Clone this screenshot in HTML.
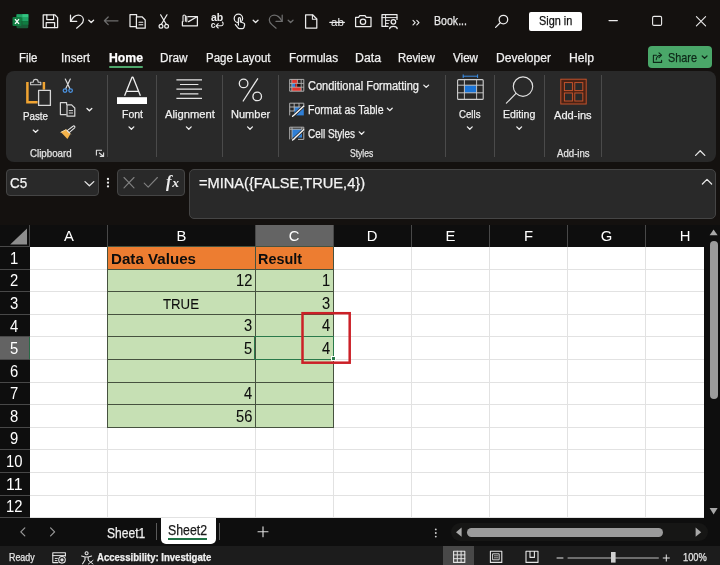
<!DOCTYPE html>
<html>
<head>
<meta charset="utf-8">
<title>Excel</title>
<style>
*{box-sizing:border-box;margin:0;padding:0}
html,body{width:720px;height:565px;overflow:hidden;background:#14110f}
body{font-family:"Liberation Sans",sans-serif;color:#fff;position:relative}
.abs{position:absolute}
.t{position:absolute;white-space:nowrap;line-height:1;transform-origin:0 50%;-webkit-text-stroke:0.25px currentColor}
svg{position:absolute;overflow:visible;left:0;top:0}
.sep{position:absolute;top:75px;width:1px;height:82px;background:#4a4a4a}
.hl{position:absolute;left:29.5px;width:674.5px;height:1px;background:#e2e2e2}
.vl{position:absolute;top:246.5px;width:1px;height:271px;background:#e2e2e2}
.ch{position:absolute;top:225px;height:21.5px;background:#0e0e0e}
</style>
</head>
<body>

<!-- ===== RIBBON PANEL ===== -->
<div class="abs" style="left:6px;top:71px;width:710px;height:91px;background:#292929;border-radius:8px"></div>
<div class="sep" style="left:107px"></div>
<div class="sep" style="left:156px"></div>
<div class="sep" style="left:222.3px"></div>
<div class="sep" style="left:278px"></div>
<div class="sep" style="left:445px"></div>
<div class="sep" style="left:494.4px"></div>
<div class="sep" style="left:544.4px"></div>
<div class="sep" style="left:601.3px"></div>

<!-- Home underline -->
<div class="abs" style="left:109px;top:65.5px;width:34px;height:2px;background:#4fa86d;border-radius:1px"></div>
<!-- Sign in button -->
<div class="abs" style="left:529px;top:12.2px;width:52.8px;height:18.6px;background:#fff;border-radius:2px"></div>
<!-- Share button -->
<div class="abs" style="left:648px;top:46px;width:64px;height:22px;background:#4aa769;border-radius:4px"></div>

<!-- ===== FORMULA BAR ===== -->
<div class="abs" style="left:6px;top:169px;width:93px;height:26.5px;background:#292929;border:1px solid #454545;border-radius:4px"></div>
<div class="abs" style="left:117px;top:169px;width:68px;height:26.5px;background:#292929;border:1px solid #454545;border-radius:4px"></div>
<div class="abs" style="left:189px;top:169px;width:527px;height:49.5px;background:#292929;border:1px solid #454545;border-radius:5px"></div>

<!-- ===== GRID ===== -->
<div class="abs" style="left:0;top:225px;width:704px;height:293px;background:#fff"></div>
<!-- header strip -->
<div class="abs" style="left:0;top:225px;width:704px;height:21.5px;background:#0e0e0e"></div>
<div class="abs" style="left:0;top:225px;width:29.5px;height:293px;background:#0e0e0e"></div>
<!-- selected col C header / row 5 header -->
<div class="abs" style="left:254.5px;top:224.5px;width:79px;height:21.5px;background:#646464"></div>
<div class="abs" style="left:0;top:337px;width:29.5px;height:22.5px;background:#636363"></div>
<div class="abs" style="left:28.5px;top:337px;width:1px;height:22.5px;background:#2a6b48"></div>
<div class="abs" style="left:255px;top:245.5px;width:78.5px;height:1px;background:#3c5a48"></div>
<div class="hl" style="top:268.59px"></div>
<div class="hl" style="top:291.18px"></div>
<div class="hl" style="top:313.77px"></div>
<div class="hl" style="top:336.37px"></div>
<div class="hl" style="top:358.96px"></div>
<div class="hl" style="top:381.55px"></div>
<div class="hl" style="top:404.14px"></div>
<div class="hl" style="top:426.73px"></div>
<div class="hl" style="top:449.33px"></div>
<div class="hl" style="top:471.92px"></div>
<div class="hl" style="top:494.51px"></div>
<div class="hl" style="top:517.10px"></div>
<div class="vl" style="left:107.00px"></div>
<div class="vl" style="left:254.50px"></div>
<div class="vl" style="left:332.75px"></div>
<div class="vl" style="left:411.00px"></div>
<div class="vl" style="left:489.00px"></div>
<div class="vl" style="left:567.00px"></div>
<div class="vl" style="left:645.00px"></div>
<div class="abs" style="left:0;top:246.00px;width:29.5px;height:1px;background:#484848"></div>
<div class="abs" style="left:0;top:268.59px;width:29.5px;height:1px;background:#484848"></div>
<div class="abs" style="left:0;top:291.18px;width:29.5px;height:1px;background:#484848"></div>
<div class="abs" style="left:0;top:313.77px;width:29.5px;height:1px;background:#484848"></div>
<div class="abs" style="left:0;top:336.37px;width:29.5px;height:1px;background:#484848"></div>
<div class="abs" style="left:0;top:358.96px;width:29.5px;height:1px;background:#484848"></div>
<div class="abs" style="left:0;top:381.55px;width:29.5px;height:1px;background:#484848"></div>
<div class="abs" style="left:0;top:404.14px;width:29.5px;height:1px;background:#484848"></div>
<div class="abs" style="left:0;top:426.73px;width:29.5px;height:1px;background:#484848"></div>
<div class="abs" style="left:0;top:449.33px;width:29.5px;height:1px;background:#484848"></div>
<div class="abs" style="left:0;top:471.92px;width:29.5px;height:1px;background:#484848"></div>
<div class="abs" style="left:0;top:494.51px;width:29.5px;height:1px;background:#484848"></div>
<div class="abs" style="left:0;top:517.10px;width:29.5px;height:1px;background:#484848"></div>
<div class="abs" style="left:29.00px;top:225px;width:1px;height:21.5px;background:#484848"></div>
<div class="abs" style="left:107.00px;top:225px;width:1px;height:21.5px;background:#484848"></div>
<div class="abs" style="left:254.50px;top:225px;width:1px;height:21.5px;background:#484848"></div>
<div class="abs" style="left:332.75px;top:225px;width:1px;height:21.5px;background:#484848"></div>
<div class="abs" style="left:411.00px;top:225px;width:1px;height:21.5px;background:#484848"></div>
<div class="abs" style="left:489.00px;top:225px;width:1px;height:21.5px;background:#484848"></div>
<div class="abs" style="left:567.00px;top:225px;width:1px;height:21.5px;background:#484848"></div>
<div class="abs" style="left:645.00px;top:225px;width:1px;height:21.5px;background:#484848"></div>
<div class="abs" style="left:107.5px;top:246.50px;width:225.75px;height:22.59px;background:#ed7d31"></div>
<div class="abs" style="left:107.5px;top:269.09px;width:225.75px;height:158.14px;background:#c6e0b4"></div>
<div class="abs" style="left:107px;top:246px;width:226.75px;height:1px;background:#46523f"></div>
<div class="abs" style="left:107px;top:269px;width:226.75px;height:1px;background:#46523f"></div>
<div class="abs" style="left:107px;top:291px;width:226.75px;height:1px;background:#46523f"></div>
<div class="abs" style="left:107px;top:314px;width:226.75px;height:1px;background:#46523f"></div>
<div class="abs" style="left:107px;top:336px;width:226.75px;height:1px;background:#46523f"></div>
<div class="abs" style="left:107px;top:359px;width:226.75px;height:1px;background:#46523f"></div>
<div class="abs" style="left:107px;top:382px;width:226.75px;height:1px;background:#46523f"></div>
<div class="abs" style="left:107px;top:404px;width:226.75px;height:1px;background:#46523f"></div>
<div class="abs" style="left:107px;top:427px;width:226.75px;height:1px;background:#46523f"></div>
<div class="abs" style="left:107.00px;top:246.00px;width:1.4px;height:181.73px;background:#46523f"></div>
<div class="abs" style="left:254.50px;top:246.00px;width:1.4px;height:181.73px;background:#46523f"></div>
<div class="abs" style="left:332.75px;top:246.00px;width:1.4px;height:181.73px;background:#46523f"></div>
<div class="abs" style="left:254px;top:335.87px;width:80px;height:24.09px;border:1.5px solid #2a7a4b"></div>
<div class="abs" style="left:330.5px;top:356.46px;width:5px;height:5px;background:#2a7a4b;border:1px solid #fff"></div>

<!-- ===== SCROLLBARS ===== -->
<div class="abs" style="left:704px;top:225px;width:16px;height:293px;background:#0e0e0e"></div>
<div class="abs" style="left:710px;top:241px;width:8px;height:158px;background:#9b9b9b;border-radius:4px"></div>

<!-- ===== SHEET BAR ===== -->
<div class="abs" style="left:0;top:518px;width:720px;height:28px;background:#0e0e0e"></div>
<div class="abs" style="left:160.8px;top:518px;width:55.6px;height:25.6px;background:#fff;border-radius:0 0 5px 5px"></div>
<div class="abs" style="left:168.3px;top:537.5px;width:39px;height:2px;background:#1e7145"></div>
<div class="abs" style="left:156px;top:523px;width:1px;height:17px;background:#5a5a5a"></div>
<div class="abs" style="left:219px;top:523px;width:1px;height:17px;background:#5a5a5a"></div>
<!-- h scrollbar -->
<div class="abs" style="left:451px;top:523px;width:257px;height:18px;background:#161615;border-radius:9px"></div>
<div class="abs" style="left:466.5px;top:528px;width:196px;height:8.5px;background:#9b9b9b;border-radius:4.5px"></div>

<!-- ===== STATUS BAR ===== -->
<div class="abs" style="left:0;top:546px;width:720px;height:19px;background:#1c1c1c"></div>
<div class="abs" style="left:443px;top:546px;width:31px;height:19px;background:#484848"></div>

<div class="abs" style="left:0;top:0;width:720px;height:565px;will-change:transform">
<svg width="720" height="565" viewBox="0 0 720 565" fill="none" stroke-linecap="round" stroke-linejoin="round">
<!-- ===== TITLE BAR ICONS ===== -->
<g id="xl" stroke="none">
  <rect x="16.5" y="14.2" width="11.8" height="14" rx="1.2" fill="#185c37"/>
  <rect x="16.5" y="14.2" width="11.8" height="3.6" fill="#21a366"/>
  <rect x="22.4" y="14.2" width="5.9" height="3.6" fill="#33c481"/>
  <rect x="16.5" y="17.7" width="11.8" height="3.6" fill="#107c41"/>
  <rect x="22.4" y="17.7" width="5.9" height="3.6" fill="#21a366"/>
  <rect x="16.5" y="21.2" width="11.8" height="3.5" fill="#185c37"/>
  <rect x="22.4" y="21.2" width="5.9" height="3.5" fill="#107c41"/>
  <rect x="12.5" y="17" width="9" height="9" rx="1" fill="#107c41"/>
  <path d="M15 19.2 L19 23.9 M19 19.2 L15 23.9" stroke="#fff" stroke-width="1.3" stroke-linecap="butt"/>
</g>
<g stroke="#ececec" stroke-width="1.25">
  <!-- save -->
  <path d="M43.2 14.8 H54.8 L57.6 17.6 V27.6 H43.2 Z"/>
  <path d="M46.8 14.8 V19.6 H53.6 V14.8"/>
  <path d="M46.2 27.6 V22.6 H54.6 V27.6"/>
  <!-- undo -->
  <path d="M70.5 15.2 V21.4 H76.7"/>
  <path d="M70.8 21.2 C72.6 17.6 75.4 15.2 78.4 15.2 C81.4 15.2 83.4 17.4 83.4 20 C83.4 22 82.2 23.4 80.8 24.6 L76.6 28.2"/>
  <path d="M88.8 20.2 L91.2 22.5 L93.6 20.2" stroke-width="1.3"/>
  <!-- copy -->
  <path d="M136.2 26.6 H130 V14.6 H136.6 V16.6"/>
  <path d="M136.4 16.8 H142 L145.2 20 V28.2 H136.4 Z"/>
  <path d="M139 22.2 H142.8 M139 24.8 H142.8" stroke-width="1.1"/>
  <!-- scissors -->
  <path d="M160.6 14.8 L166.2 24.2 M167 14.8 L161.4 24.2"/>
  <circle cx="161" cy="26.2" r="1.9"/><circle cx="166.6" cy="26.2" r="1.9"/>
  <!-- envelope + clip -->
  <path d="M188 16.6 H197.4 V25.8 H182.4 V21.6"/>
  <path d="M188.6 21.6 L197 16.8"/>
  <path d="M183 21.4 V16 C183 14.6 185.4 14.6 185.4 16 V21.2 M186.8 21.8 V16.2" stroke-width="1.1"/>
  <!-- touch hand -->
  <circle cx="238.4" cy="18.4" r="4.2"/>
  <path d="M238.4 25 V18.6 C238.4 17.2 240.4 17.2 240.4 18.6 V22 L243.6 23 C244.6 23.4 244.8 24 244.6 25 L244 27.4 C243.8 28.2 243.2 28.6 242.4 28.6 H239.6 C238.8 28.6 238.2 28.2 237.8 27.6 L235.4 24.6" fill="#0e0e0e"/>
  <path d="M253.2 20.2 L255.6 22.5 L258 20.2" stroke-width="1.3"/>
  <!-- new doc -->
  <path d="M305.6 14.8 H312.6 L316.8 19 V28 H305.6 Z"/>
  <path d="M312.4 15 V19.2 H316.6" stroke-width="1.1"/>
  <!-- camera -->
  <path d="M355.6 17.4 H358.6 L359.8 15.6 H365 L366.2 17.4 H371 V26.6 H355.6 Z"/>
  <circle cx="363" cy="21.8" r="2.7"/>
  <!-- sheet+person -->
  <path d="M388 26.4 H382 V14.6 H397 V19.4"/>
  <path d="M382 17.6 H397 M385.6 14.6 V26.4 M385.6 20.4 H389.4 M385.6 23.4 H388.4" stroke-width="1"/>
  <circle cx="393.4" cy="21.8" r="2.3"/>
  <path d="M389.6 28.6 C390 25.6 396.8 25.6 397.2 28.6"/>
  <!-- » -->
  <path d="M413 20.4 L415.2 22.6 L413 24.8 M416.8 20.4 L419 22.6 L416.8 24.8" stroke-width="1.1"/>
  <!-- search -->
  <circle cx="503.4" cy="19.6" r="4.3"/>
  <path d="M500.2 22.8 L495.6 27.4"/>
  <!-- window buttons -->
  <path d="M609 20.6 H617.4" stroke-width="1.1"/>
  <rect x="652.6" y="16.4" width="9" height="9" rx="1.4" stroke-width="1.1"/>
  <path d="M696.4 16.6 L705.6 25.8 M705.6 16.6 L696.4 25.8" stroke-width="1.1"/>
</g>
<!-- dim: back arrow, redo -->
<g stroke="#6e6e6e" stroke-width="1.25">
  <path d="M104.4 20.8 H118 M108.2 17 L104.4 20.8 L108.2 24.6"/>
  <path d="M282.2 15.2 V21.4 H276"/>
  <path d="M281.9 21.2 C280.1 17.6 277.3 15.2 274.3 15.2 C271.3 15.2 269.3 17.4 269.3 20 C269.3 22 270.5 23.4 271.9 24.6 L276.1 28.2"/>
  <path d="M288.2 20.2 L290.6 22.5 L293 20.2" stroke-width="1.3"/>
</g>
<!-- ab with arrows / strikethrough ab (text-like glyphs) -->
<g fill="#ececec" stroke="none" font-family="Liberation Sans" font-size="9.5">
  <text x="211" y="21" font-size="10.5" font-weight="bold">ab</text>
  <text x="331" y="26.1" font-size="11.5">ab</text>
  <text x="210.8" y="28" font-size="8.5" font-weight="bold">c</text>
</g>
<g stroke="#ececec" stroke-width="1.1">
  <path d="M329.8 22.4 H344.4"/>
  <path d="M216.2 25.8 H221.4 C223.4 25.8 223.6 23 222.4 22 M218.2 23.6 L216 25.8 L218.2 28"/>
</g>
<!-- share icon + chevron -->
<g stroke="#0d2818" stroke-width="1.1">
  <path d="M656.4 55.2 H653.4 V62.4 H661.6 V60.2"/>
  <path d="M656.2 59.8 C656.4 56.8 658.4 55.2 661 55.2 M659 52.8 L661.6 55.2 L659 57.6"/>
  <path d="M702.2 56 L704.6 58.3 L707 56" stroke-width="1.2"/>
</g>
<!-- ===== RIBBON ICONS ===== -->
<!-- paste -->
<g stroke-width="2.5" stroke="#f0a432" stroke-linecap="butt" stroke-linejoin="miter">
  <path d="M27.4 82 V102.2 H37.6"/>
  <path d="M43.9 82 V89.6"/>
</g>
<g stroke="#cdcdcd" stroke-width="1.1">
  <path d="M30.6 84.8 V82.2 H33.2 C33.2 78.4 38.2 78.4 38.2 82.2 H40.8 V84.8 Z" fill="#292929"/>
  <rect x="38.6" y="90.4" width="11.8" height="15" fill="#292929" stroke="#d6d6d6" stroke-width="1.3"/>
  <path d="M33.2 130.1 L35.6 132.3 L38 130.1" stroke="#f0f0f0" stroke-width="1.3"/>
</g>
<!-- scissors (ribbon) -->
<g stroke="#dcdcdc" stroke-width="1.2">
  <path d="M65.3 79 L69.8 88.6 M70.3 79 L65.8 88.6"/>
</g>
<g stroke="#4a90dd" stroke-width="1.3">
  <circle cx="65" cy="90.6" r="1.8"/><circle cx="70.6" cy="90.6" r="1.8"/>
</g>
<!-- copy (ribbon) -->
<g stroke="#d6d6d6" stroke-width="1.2">
  <path d="M66.2 114.6 H60.4 V102.6 H66.6 V104.4"/>
  <path d="M67 104.8 H71.6 L74.8 108 V116.2 H67 Z"/>
  <path d="M69.2 110.6 H72.6 M69.2 113 H72.6" stroke-width="1"/>
  <path d="M87.0 108.5 L89.4 110.8 L91.8 108.5" stroke="#f0f0f0" stroke-width="1.3"/>
</g>
<!-- format painter -->
<g>
  <path d="M61 132.2 L66.2 129.6 L70.4 134 L67.4 139 Z" fill="#f3b24a" stroke="none"/>
  <path d="M61 132.2 L66.2 129.6 L70.4 134" stroke="#f8d9a0" stroke-width="1"/>
  <path d="M67.2 130.6 L69.2 132.6 L74.6 127.8 C75.6 126.8 74 125.2 73 126.2 Z" stroke="#e6e6e6" stroke-width="1.1" fill="#292929"/>
</g>
<!-- launcher -->
<g stroke="#e0e0e0" stroke-width="1.1" stroke-linecap="butt">
  <path d="M96.4 155.6 V150.2 H102"/>
  <path d="M99 152.8 L103.4 156.2 M103.6 152.6 V156.4 H99.8"/>
</g>
<!-- Font A -->
<g stroke="#f0f0f0" stroke-width="1.3" stroke-linecap="butt">
  <path d="M124.6 95.8 L132 77.2 H133 L140.4 95.8 M126.6 91.4 H138.4"/>
</g>
<rect x="117" y="97.2" width="30" height="6.8" fill="#fff"/>
<g stroke="#f0f0f0" stroke-width="1.3">
  <path d="M129.0 126.9 L131.4 129.2 L133.8 126.9"/>
  <path d="M186.4 126.9 L188.8 129.2 L191.2 126.9"/>
  <path d="M247.6 126.9 L250.0 129.2 L252.4 126.9"/>
  <path d="M467.4 126.9 L469.8 129.2 L472.2 126.9"/>
  <path d="M516.8 126.9 L519.2 129.2 L521.6 126.9"/>
  <path d="M423.8 85.1 L426.2 87.4 L428.6 85.1"/>
  <path d="M387.4 108.3 L389.8 110.6 L392.2 108.3"/>
  <path d="M359.2 131.9 L361.6 134.2 L364.0 131.9"/>
  <path d="M695.6 155.4 L700.2 150.8 L704.8 155.4" stroke="#e6e6e6"/>
  <path d="M702.4 184 L707 179.4 L711.6 184" stroke="#e6e6e6"/>
</g>
<!-- alignment -->
<g stroke="#e4e4e4" stroke-width="1.2" stroke-linecap="butt">
  <path d="M176.4 79.9 H202 M180 84.5 H198.4 M176.4 89.2 H202 M180 93.8 H198.4 M176.4 98.4 H202"/>
</g>
<!-- percent -->
<g stroke="#e8e8e8" stroke-width="1.3">
  <circle cx="243.6" cy="83.4" r="4.3"/><circle cx="257.2" cy="96.4" r="4.3"/>
  <path d="M257.6 78.8 L243.2 101"/>
</g>
<!-- conditional formatting -->
<g stroke="none">
  <rect x="291.8" y="79.6" width="5.6" height="3.8" fill="#e3352f"/>
  <rect x="291.8" y="83.4" width="3.6" height="3.8" fill="#2f7fd6"/>
  <rect x="295.4" y="83.4" width="5.8" height="3.8" fill="#151515"/>
  <rect x="295.4" y="83.4" width="1.8" height="3.8" fill="#e3352f"/>
  <rect x="291.8" y="87.2" width="9.4" height="3.8" fill="#e3352f"/>
</g>
<g stroke="#bdbdbd" stroke-width="0.9" stroke-linecap="butt">
  <rect x="289.7" y="79.4" width="14.1" height="11.8"/>
  <path d="M289.7 83.4 H303.8 M289.7 87.2 H303.8 M291.8 79.4 V91.2 M301.2 79.4 V91.2 M297.4 79.4 V83.4" stroke-width="0.8"/>
</g>
<!-- format as table -->
<rect x="294.2" y="107" width="9.6" height="8.4" fill="#2f7fd6"/>
<g stroke="#bdbdbd" stroke-width="0.9" stroke-linecap="butt">
  <path d="M289.7 115.4 V103.2 H303.8 V107 M289.7 107 H303.8 M289.7 111 H294.2 M294.2 103.2 V111 M299 103.2 V107"/>
</g>
<path d="M303.4 106.4 L293.6 115.6" stroke="#292929" stroke-width="3" stroke-linecap="butt"/>
<path d="M303.6 106.2 L294.4 114.8 L292.6 116.2" stroke="#f4f4f4" stroke-width="1.45" stroke-linecap="round"/>
<!-- cell styles -->
<rect x="292" y="129.2" width="10" height="8.4" fill="#2f7fd6"/>
<g stroke="#bdbdbd" stroke-width="0.9" stroke-linecap="butt">
  <path d="M289.7 139.4 V127.2 H303.8 V139.4 H298 M289.7 129.2 H303.8 M292 127.2 V139.2 M301.8 127.2 V131"/>
</g>
<path d="M303.4 130 L293.6 139.4" stroke="#292929" stroke-width="3" stroke-linecap="butt"/>
<path d="M303.6 129.8 L294.4 138.6 L292.6 140" stroke="#f4f4f4" stroke-width="1.45" stroke-linecap="round"/>
<!-- cells -->
<rect x="464.4" y="85.2" width="12.2" height="7.6" fill="#1b74d6"/>
<g stroke="#cfcfcf" stroke-width="1.1" stroke-linecap="butt">
  <rect x="457.6" y="79.6" width="25.6" height="19.8" rx="1"/>
  <path d="M457.6 85.2 H483.2 M457.6 92.8 H483.2 M464.4 79.6 V99.4 M476.6 79.6 V99.4" stroke-width="0.9"/>
</g>
<path d="M463.2 76.2 H477.6 M463.2 74.8 V77.6 M477.6 74.8 V77.6" stroke="#3c8fe6" stroke-width="1"/>
<!-- editing -->
<g stroke="#e0e0e0" stroke-width="1.15">
  <circle cx="523" cy="86.6" r="9.7"/>
  <path d="M516 93.4 L506.4 103.2"/>
</g>
<!-- add-ins -->
<g stroke="#c9552d" stroke-width="0.95" stroke-linejoin="miter">
  <rect x="560.8" y="79.2" width="25.4" height="24.8" fill="#4a2214"/>
  <rect x="564.4" y="82.6" width="8" height="8" fill="#292929"/>
  <rect x="574.8" y="82.6" width="8" height="8" fill="#292929"/>
  <rect x="564.4" y="93" width="8" height="8" fill="#292929"/>
  <rect x="574.8" y="93" width="8" height="8" fill="#292929"/>
</g>

<!-- ===== FORMULA BAR ICONS ===== -->
<g stroke="#e6e6e6" stroke-width="1.3">
  <path d="M85 181.6 L89.4 185.8 L93.8 181.6"/>
</g>
<g fill="#e8e8e8" stroke="none">
  <circle cx="108" cy="179" r="1.15"/><circle cx="108" cy="182.7" r="1.15"/><circle cx="108" cy="186.4" r="1.15"/>
</g>
<g stroke="#808080" stroke-width="1.1">
  <path d="M124 177.5 L134 187.9 M134 177.5 L124 187.9"/>
  <path d="M144.2 183.2 L148.2 187.2 L157.4 177.5"/>
</g>
<text x="166" y="187.2" font-family="Liberation Serif" font-style="italic" font-weight="bold" font-size="16.5" fill="#ececec" stroke="none">f</text>
<text x="172.2" y="187.4" font-family="Liberation Serif" font-style="italic" font-weight="bold" font-size="13.5" fill="#ececec" stroke="none">x</text>
<!-- select all triangle -->
<path d="M27 228.6 V244.4 H10.2 Z" fill="#8e8e8e" stroke="none"/>
<!-- v scrollbar arrows -->
<path d="M709.6 235.2 L713.6 229.6 L717.6 235.2 Z" fill="#a8a8a8" stroke="none"/>
<path d="M709.6 508 L713.6 514.4 L717.6 508 Z" fill="#a8a8a8" stroke="none"/>
<!-- h scrollbar arrows + dots -->
<path d="M461.6 527.6 L456 532.2 L461.6 536.8 Z" fill="#a8a8a8" stroke="none"/>
<path d="M695.6 527.6 L701.2 532.2 L695.6 536.8 Z" fill="#a8a8a8" stroke="none"/>
<g fill="#d0d0d0" stroke="none">
  <circle cx="435.8" cy="529.4" r="0.95"/><circle cx="435.8" cy="533" r="0.95"/><circle cx="435.8" cy="536.6" r="0.95"/>
</g>
<!-- sheet nav -->
<g stroke="#9a9a9a" stroke-width="1.2">
  <path d="M24.8 527.8 L20.8 531.8 L24.8 535.8"/>
  <path d="M50.6 527.8 L54.6 531.8 L50.6 535.8"/>
</g>
<path d="M258 531.7 H268 M263 526.7 V536.7" stroke="#dcdcdc" stroke-width="1.15"/>
<!-- ===== STATUS ICONS ===== -->
<g stroke="#e4e4e4" stroke-width="1.1">
  <path d="M58 562.6 H52.8 V552.8 H65.4 V556"/>
  <path d="M52.8 555.6 H65.4 M55.2 558.4 H57.4 M55.2 560.6 H57" stroke-width="1"/>
  <circle cx="62" cy="559.8" r="3.3"/>
  <circle cx="62" cy="559.8" r="1.1" fill="#e4e4e4"/>
  <!-- accessibility -->
  <circle cx="86.6" cy="553.2" r="1.5"/>
  <path d="M81.6 556 L85 557 V560 L82.6 563.8 M91.6 556 L88.2 557 V559.4 M85 557 H88.2" />
  <path d="M88.4 560.4 L93 564 M93 560.4 L88.4 564" stroke-width="1"/>
  <!-- view: normal -->
  <rect x="453.6" y="551.2" width="11.2" height="11.2" stroke-width="1.1"/>
  <path d="M457.3 551.2 V562.4 M461.1 551.2 V562.4 M453.6 554.9 H464.8 M453.6 558.7 H464.8" stroke-width="1"/>
  <!-- view: page layout -->
  <rect x="490.4" y="551.2" width="11.4" height="11.2" stroke-width="1.1"/>
  <rect x="493" y="553.8" width="6.2" height="6" stroke-width="0.9"/>
  <path d="M494.4 555.8 H497.8 M494.4 557.8 H497.8" stroke-width="0.7"/>
  <!-- view: page break -->
  <path d="M526 551.2 H538 V562.4 H526 Z M530 551.2 V557.4 H534.4 V551.2" stroke-width="1.1"/>
  <!-- zoom -->
  <path d="M557 558 H563" stroke-width="1"/>
  <path d="M568 558 H658.4" stroke="#bdbdbd" stroke-width="1"/>
  <path d="M663.2 558 H669.4 M666.3 554.9 V561.1" stroke-width="1"/>
</g>
<rect x="611" y="552" width="4.6" height="10.6" fill="#cfcfcf" stroke="none"/>

<!-- redbox -->
<rect x="302.5" y="313.2" width="47.2" height="49.5" stroke="#cb2027" stroke-width="2.5" stroke-linejoin="miter" fill="none"/>

</svg>


<span class="t" style="left:18.5px;top:52.24px;font-size:12px;font-weight:normal;color:#f0f0f0;transform:scaleX(0.956);">File</span>
<span class="t" style="left:61.0px;top:52.24px;font-size:12px;font-weight:normal;color:#f0f0f0;transform:scaleX(0.966);">Insert</span>
<span class="t" style="left:109.0px;top:52.24px;font-size:12px;font-weight:bold;color:#ffffff;transform:scaleX(1.020);">Home</span>
<span class="t" style="left:159.5px;top:52.24px;font-size:12px;font-weight:normal;color:#f0f0f0;transform:scaleX(0.982);">Draw</span>
<span class="t" style="left:205.5px;top:52.24px;font-size:12px;font-weight:normal;color:#f0f0f0;transform:scaleX(0.957);">Page Layout</span>
<span class="t" style="left:289.0px;top:52.24px;font-size:12px;font-weight:normal;color:#f0f0f0;transform:scaleX(0.980);">Formulas</span>
<span class="t" style="left:355.0px;top:52.24px;font-size:12px;font-weight:normal;color:#f0f0f0;transform:scaleX(1.025);">Data</span>
<span class="t" style="left:398.0px;top:52.24px;font-size:12px;font-weight:normal;color:#f0f0f0;transform:scaleX(0.940);">Review</span>
<span class="t" style="left:453.0px;top:52.24px;font-size:12px;font-weight:normal;color:#f0f0f0;transform:scaleX(0.969);">View</span>
<span class="t" style="left:496.0px;top:52.24px;font-size:12px;font-weight:normal;color:#f0f0f0;transform:scaleX(1.005);">Developer</span>
<span class="t" style="left:569.0px;top:52.24px;font-size:12px;font-weight:normal;color:#f0f0f0;transform:scaleX(1.013);">Help</span>
<span class="t" style="left:434.3px;top:15.02px;font-size:12.5px;font-weight:normal;color:#e8e8e8;transform:scaleX(0.848);">Book...</span>
<span class="t" style="left:539.2px;top:15.02px;font-size:12.5px;font-weight:normal;color:#111;transform:scaleX(0.871);">Sign in</span>
<span class="t" style="left:668.2px;top:51.30px;font-size:13px;font-weight:normal;color:#0d2818;transform:scaleX(0.836);">Share</span>
<span class="t" style="left:23.3px;top:111.27px;font-size:11.5px;font-weight:normal;color:#f0f0f0;transform:scaleX(0.850);">Paste</span>
<span class="t" style="left:121.5px;top:108.97px;font-size:11.5px;font-weight:normal;color:#f0f0f0;transform:scaleX(0.912);">Font</span>
<span class="t" style="left:164.6px;top:108.97px;font-size:11.5px;font-weight:normal;color:#f0f0f0;transform:scaleX(0.974);">Alignment</span>
<span class="t" style="left:230.6px;top:108.97px;font-size:11.5px;font-weight:normal;color:#f0f0f0;transform:scaleX(0.958);">Number</span>
<span class="t" style="left:459.4px;top:108.97px;font-size:11.5px;font-weight:normal;color:#f0f0f0;transform:scaleX(0.841);">Cells</span>
<span class="t" style="left:503.0px;top:108.97px;font-size:11.5px;font-weight:normal;color:#f0f0f0;transform:scaleX(0.921);">Editing</span>
<span class="t" style="left:554.0px;top:110.27px;font-size:11.5px;font-weight:normal;color:#f0f0f0;transform:scaleX(0.964);">Add-ins</span>
<span class="t" style="left:308.0px;top:80.24px;font-size:12px;font-weight:normal;color:#f0f0f0;transform:scaleX(0.919);">Conditional Formatting</span>
<span class="t" style="left:308.0px;top:104.14px;font-size:12px;font-weight:normal;color:#f0f0f0;transform:scaleX(0.880);">Format as Table</span>
<span class="t" style="left:308.0px;top:127.64px;font-size:12px;font-weight:normal;color:#f0f0f0;transform:scaleX(0.829);">Cell Styles</span>
<span class="t" style="left:29.8px;top:148.11px;font-size:10.5px;font-weight:normal;color:#e4e4e4;transform:scaleX(0.928);">Clipboard</span>
<span class="t" style="left:349.8px;top:148.11px;font-size:10.5px;font-weight:normal;color:#e4e4e4;transform:scaleX(0.815);">Styles</span>
<span class="t" style="left:556.6px;top:148.11px;font-size:10.5px;font-weight:normal;color:#e4e4e4;transform:scaleX(0.918);">Add-ins</span>
<span class="t" style="left:10.3px;top:176.01px;font-size:14.4px;font-weight:normal;color:#f4f4f4;transform:scaleX(0.934);">C5</span>
<span class="t" style="left:199.0px;top:176.01px;font-size:14.4px;font-weight:normal;color:#f4f4f4;transform:scaleX(1.015);">=MINA({FALSE,TRUE,4})</span>
<span class="t" style="left:107.3px;top:526.45px;font-size:14px;font-weight:normal;color:#f0f0f0;transform:scaleX(0.863);">Sheet1</span>
<span class="t" style="left:168.3px;top:523.15px;font-size:14px;font-weight:normal;color:#1a1a1a;transform:scaleX(0.879);">Sheet2</span>
<span class="t" style="left:9.3px;top:552.53px;font-size:10px;font-weight:normal;color:#e4e4e4;transform:scaleX(0.889);">Ready</span>
<span class="t" style="left:97.3px;top:552.53px;font-size:10px;font-weight:bold;color:#f0f0f0;transform:scaleX(0.956);">Accessibility: Investigate</span>
<span class="t" style="left:682.5px;top:552.53px;font-size:10px;font-weight:normal;color:#e4e4e4;transform:scaleX(0.929);">100%</span>
<span class="t" style="left:10.1px;top:250.75px;font-size:16px;font-weight:normal;color:#fff;transform:scaleX(0.926);-webkit-text-stroke:0;">1</span>
<span class="t" style="left:10.1px;top:273.34px;font-size:16px;font-weight:normal;color:#fff;transform:scaleX(0.926);-webkit-text-stroke:0;">2</span>
<span class="t" style="left:10.1px;top:295.93px;font-size:16px;font-weight:normal;color:#fff;transform:scaleX(0.926);-webkit-text-stroke:0;">3</span>
<span class="t" style="left:10.1px;top:318.52px;font-size:16px;font-weight:normal;color:#fff;transform:scaleX(0.926);-webkit-text-stroke:0;">4</span>
<span class="t" style="left:10.1px;top:341.11px;font-size:16px;font-weight:normal;color:#fff;transform:scaleX(0.926);-webkit-text-stroke:0;">5</span>
<span class="t" style="left:10.1px;top:363.71px;font-size:16px;font-weight:normal;color:#fff;transform:scaleX(0.926);-webkit-text-stroke:0;">6</span>
<span class="t" style="left:10.1px;top:386.30px;font-size:16px;font-weight:normal;color:#fff;transform:scaleX(0.926);-webkit-text-stroke:0;">7</span>
<span class="t" style="left:10.1px;top:408.89px;font-size:16px;font-weight:normal;color:#fff;transform:scaleX(0.926);-webkit-text-stroke:0;">8</span>
<span class="t" style="left:10.1px;top:431.48px;font-size:16px;font-weight:normal;color:#fff;transform:scaleX(0.926);-webkit-text-stroke:0;">9</span>
<span class="t" style="left:5.9px;top:454.07px;font-size:16px;font-weight:normal;color:#fff;transform:scaleX(0.927);-webkit-text-stroke:0;">10</span>
<span class="t" style="left:5.9px;top:476.66px;font-size:16px;font-weight:normal;color:#fff;transform:scaleX(0.993);-webkit-text-stroke:0;">11</span>
<span class="t" style="left:5.9px;top:499.26px;font-size:16px;font-weight:normal;color:#fff;transform:scaleX(0.927);-webkit-text-stroke:0;">12</span>
<span class="t" style="left:63.0px;top:229.07px;font-size:14.8px;font-weight:normal;color:#fff;transform:scaleX(1.000);width:12px;text-align:center;-webkit-text-stroke:0;">A</span>
<span class="t" style="left:175.5px;top:229.07px;font-size:14.8px;font-weight:normal;color:#fff;transform:scaleX(1.000);width:12px;text-align:center;-webkit-text-stroke:0;">B</span>
<span class="t" style="left:288.0px;top:229.07px;font-size:14.8px;font-weight:normal;color:#fff;transform:scaleX(1.000);width:12px;text-align:center;-webkit-text-stroke:0;">C</span>
<span class="t" style="left:366.0px;top:229.07px;font-size:14.8px;font-weight:normal;color:#fff;transform:scaleX(1.000);width:12px;text-align:center;-webkit-text-stroke:0;">D</span>
<span class="t" style="left:444.5px;top:229.07px;font-size:14.8px;font-weight:normal;color:#fff;transform:scaleX(1.000);width:12px;text-align:center;-webkit-text-stroke:0;">E</span>
<span class="t" style="left:522.5px;top:229.07px;font-size:14.8px;font-weight:normal;color:#fff;transform:scaleX(1.000);width:12px;text-align:center;-webkit-text-stroke:0;">F</span>
<span class="t" style="left:600.5px;top:229.07px;font-size:14.8px;font-weight:normal;color:#fff;transform:scaleX(1.000);width:12px;text-align:center;-webkit-text-stroke:0;">G</span>
<span class="t" style="left:679.0px;top:229.07px;font-size:14.8px;font-weight:normal;color:#fff;transform:scaleX(1.000);width:12px;text-align:center;-webkit-text-stroke:0;">H</span>
<span class="t" style="left:110.8px;top:252.13px;font-size:14.6px;font-weight:bold;color:#0d0d0d;transform:scaleX(1.037);-webkit-text-stroke:0;">Data Values</span>
<span class="t" style="left:257.6px;top:252.13px;font-size:14.6px;font-weight:bold;color:#0d0d0d;transform:scaleX(0.986);-webkit-text-stroke:0;">Result</span>
<span class="t" style="left:235.7px;top:273.14px;font-size:16px;font-weight:normal;color:#0d0d0d;transform:scaleX(0.916);-webkit-text-stroke:0.1px;">12</span>
<span class="t" style="left:322.4px;top:273.14px;font-size:16px;font-weight:normal;color:#0d0d0d;transform:scaleX(0.915);-webkit-text-stroke:0.1px;">1</span>
<span class="t" style="left:163.2px;top:296.14px;font-size:15.4px;font-weight:normal;color:#0d0d0d;transform:scaleX(0.859);-webkit-text-stroke:0.1px;">TRUE</span>
<span class="t" style="left:322.4px;top:295.73px;font-size:16px;font-weight:normal;color:#0d0d0d;transform:scaleX(0.915);-webkit-text-stroke:0.1px;">3</span>
<span class="t" style="left:243.8px;top:318.32px;font-size:16px;font-weight:normal;color:#0d0d0d;transform:scaleX(0.915);-webkit-text-stroke:0.1px;">3</span>
<span class="t" style="left:322.4px;top:318.32px;font-size:16px;font-weight:normal;color:#0d0d0d;transform:scaleX(0.915);-webkit-text-stroke:0.1px;">4</span>
<span class="t" style="left:243.8px;top:340.91px;font-size:16px;font-weight:normal;color:#0d0d0d;transform:scaleX(0.915);-webkit-text-stroke:0.1px;">5</span>
<span class="t" style="left:322.4px;top:340.91px;font-size:16px;font-weight:normal;color:#0d0d0d;transform:scaleX(0.915);-webkit-text-stroke:0.1px;">4</span>
<span class="t" style="left:243.8px;top:386.10px;font-size:16px;font-weight:normal;color:#0d0d0d;transform:scaleX(0.915);-webkit-text-stroke:0.1px;">4</span>
<span class="t" style="left:235.7px;top:408.69px;font-size:16px;font-weight:normal;color:#0d0d0d;transform:scaleX(0.916);-webkit-text-stroke:0.1px;">56</span>
</div>

</body>
</html>
